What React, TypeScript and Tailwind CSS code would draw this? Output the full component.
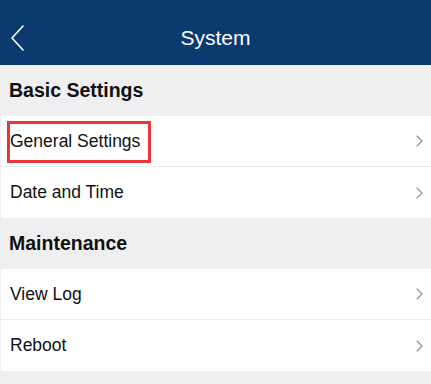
const font = { fontFamily: '"Liberation Sans", Arial, sans-serif' };

function Chevron() {
  return (
    <svg width="7" height="12" viewBox="0 0 7 12" fill="none" className="shrink-0">
      <path d="M1 1l5 5-5 5" stroke="#8e8e93" strokeWidth="1.1" strokeLinecap="round" strokeLinejoin="round" />
    </svg>
  );
}

function Row({ label, last, marked }: { label: string; last?: boolean; marked?: boolean }) {
  return (
    <div
      className={`relative h-[51px] bg-white flex items-center justify-between pl-[9px] pr-[8px] ${
        last ? '' : 'border-b border-[#e6ebf1]'
      }`}
    >
      <span className="text-[17.5px] text-[#111]">{label}</span>
      <Chevron />
      {marked && (
        <div className="absolute left-[6px] top-[5px] w-[144px] h-[42px] border-[3px] border-[#e8373a]" />
      )}
    </div>
  );
}

function Section({ title }: { title: string }) {
  return (
    <div className="h-[51px] flex items-center pl-[9px] pt-[1px]">
      <span className="text-[19.5px] font-bold text-[#111]">{title}</span>
    </div>
  );
}

export default function App() {
  return (
    <div className="w-[431px] h-[384px] bg-[#efeff2] overflow-hidden" style={font}>
      <header className="relative h-[65px] bg-[#0b3b6e] flex items-center justify-center">
        <svg width="16" height="26" viewBox="0 0 16 26" fill="none" className="absolute left-[10px] top-[25px]">
          <path d="M13 1L2 13l11 12" stroke="white" strokeWidth="1.6" strokeLinecap="round" strokeLinejoin="round" />
        </svg>
        <h1 className="text-[21px] text-white mt-[10px]">System</h1>
      </header>

      <Section title="Basic Settings" />
      <div className="ml-[1px]">
        <Row label="General Settings" marked />
        <Row label="Date and Time" last />
      </div>

      <Section title="Maintenance" />
      <div className="ml-[1px]">
        <Row label="View Log" />
        <Row label="Reboot" last />
      </div>
    </div>
  );
}
